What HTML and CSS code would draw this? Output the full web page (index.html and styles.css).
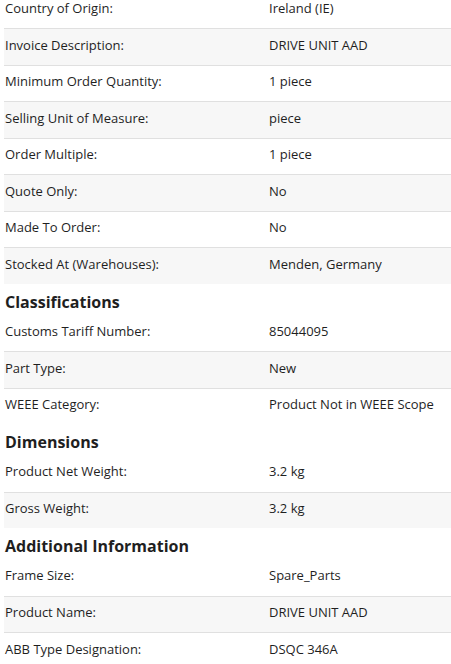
FILE: index.html
```html
<!DOCTYPE html>
<html lang="en">
<head>
<meta charset="utf-8">
<title>Product details</title>
<link rel="stylesheet" href="styles.css">
</head>
<body>
<div class="details">
  <div class="group">
    <div class="row"><div class="label">Country of Origin:</div><div class="value">Ireland (IE)</div></div>
    <div class="row"><div class="label">Invoice Description:</div><div class="value">DRIVE UNIT AAD</div></div>
    <div class="row"><div class="label">Minimum Order Quantity:</div><div class="value">1 piece</div></div>
    <div class="row"><div class="label">Selling Unit of Measure:</div><div class="value">piece</div></div>
    <div class="row"><div class="label">Order Multiple:</div><div class="value">1 piece</div></div>
    <div class="row"><div class="label">Quote Only:</div><div class="value">No</div></div>
    <div class="row"><div class="label">Made To Order:</div><div class="value">No</div></div>
    <div class="row"><div class="label">Stocked At (Warehouses):</div><div class="value">Menden, Germany</div></div>
  </div>
  <h2 class="heading">Classifications</h2>
  <div class="group">
    <div class="row"><div class="label">Customs Tariff Number:</div><div class="value">85044095</div></div>
    <div class="row"><div class="label">Part Type:</div><div class="value">New</div></div>
    <div class="row"><div class="label">WEEE Category:</div><div class="value">Product Not in WEEE Scope</div></div>
  </div>
  <h2 class="heading">Dimensions</h2>
  <div class="group">
    <div class="row"><div class="label">Product Net Weight:</div><div class="value">3.2 kg</div></div>
    <div class="row"><div class="label">Gross Weight:</div><div class="value">3.2 kg</div></div>
  </div>
  <h2 class="heading">Additional Information</h2>
  <div class="group">
    <div class="row"><div class="label">Frame Size:</div><div class="value">Spare_Parts</div></div>
    <div class="row"><div class="label">Product Name:</div><div class="value">DRIVE UNIT AAD</div></div>
    <div class="row"><div class="label">ABB Type Designation:</div><div class="value">DSQC 346A</div></div>
  </div>
</div>
</body>
</html>
```
FILE: styles.css
```css
html, body {
  margin: 0;
  padding: 0;
  background: #ffffff;
}
body {
  font-family: "Open Sans", "Noto Sans", sans-serif;
  font-size: 13px;
  color: #1f1f1f;
  overflow: hidden;
}
.details {
  margin: -8.5px 0 0 4px;
}
.group {
  display: flex;
  flex-direction: column;
}
.row {
  display: grid;
  grid-template-columns: 264px 1fr;
  align-items: center;
  height: 36.5px;
  box-sizing: border-box;
  padding: 0 0 4px 1px;
}
.row + .row {
  border-top: 1px solid #e0e0e0;
}
.row:nth-child(even) {
  background: #f7f7f7;
}
.label, .value {
  line-height: 18px;
  white-space: nowrap;
}
.heading {
  margin: 0;
  height: 31px;
  box-sizing: border-box;
  padding: 8px 0 0 1px;
  font-size: 16px;
  line-height: 20px;
  font-weight: 700;
  color: #1f1f1f;
}
```
